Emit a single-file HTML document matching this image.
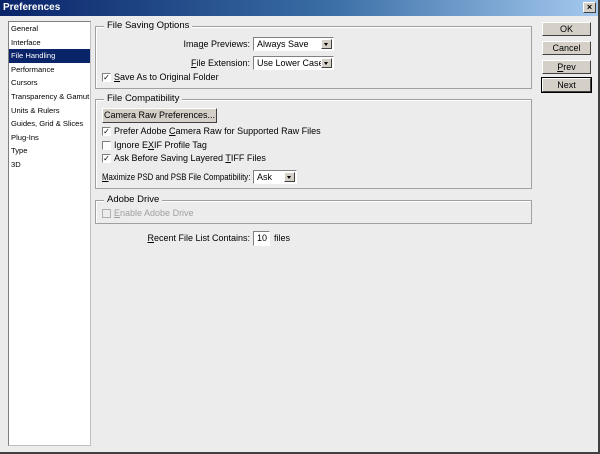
<!DOCTYPE html>
<html><head><style>
*{margin:0;padding:0;box-sizing:border-box}
body{width:600px;height:454px;overflow:hidden;background:#ececec;font-family:"Liberation Sans",sans-serif;font-size:9px;color:#000;position:relative}
.a{position:absolute;white-space:nowrap}
.r{position:absolute;white-space:nowrap;right:350px;text-align:right}
.title{left:0;top:0;width:600px;height:16px;background:linear-gradient(90deg,#0a246a,#3a6ea5 55%,#a6caf0);color:#fff;font-weight:bold;font-size:10px;padding:2px 3px}
.x{right:4px;top:2px;width:13px;height:11px;background:#d4d0c8;border:1px solid;border-color:#fff #404040 #404040 #fff;color:#000;font-size:9px;line-height:9px;text-align:center;font-weight:bold}
.list{left:8px;top:21px;width:83px;height:425px;background:#fff;border:1px solid;border-color:#808080 #c0c0c0 #c0c0c0 #808080;overflow:hidden}
.list div{height:13.6px;line-height:13.6px;padding-left:2px;font-size:7.6px}
.list .sel{background:#0a246a;color:#fff}
.grp{border:1px solid #a0a0a0;box-shadow:1px 1px 0 #fff inset}
.lg{background:#ececec;padding:0 3px;font-size:9.5px}
.sel2{background:#fff;border:1px solid;border-color:#808080 #fff #fff #808080;height:14px;padding-left:3px;line-height:12px;overflow:hidden}
.sel2 b{position:absolute;right:1px;top:1px;width:11px;height:10px;background:#d4d0c8;border:1px solid;border-color:#fff #404040 #404040 #fff}
.sel2 b:after{content:"";position:absolute;left:2px;top:3px;border:2.5px solid transparent;border-top:3px solid #000}
.cb{width:9px;height:9px;background:#fff;border:1px solid;border-color:#808080 #fff #fff #808080;font-size:8px;line-height:7px;text-align:center}
.btn{background:#d4d0c8;border:1px solid;border-color:#fff #404040 #404040 #fff;text-align:center;line-height:12px}
u{text-decoration:underline}
</style></head><body>
<div class="a title">Preferences</div>
<div class="a x">×</div>
<div class="a list">
<div>General</div><div>Interface</div><div class="sel">File Handling</div><div>Performance</div><div>Cursors</div><div>Transparency &amp; Gamut</div><div>Units &amp; Rulers</div><div>Guides, Grid &amp; Slices</div><div>Plug-Ins</div><div>Type</div><div>3D</div>
</div>

<div class="a grp" style="left:95px;top:26px;width:437px;height:63px"></div>
<div class="a lg" style="left:104px;top:20px">File Saving Options</div>
<div class="r" style="top:39px">Ima<u>g</u>e Previews:</div>
<div class="a sel2" style="left:253px;top:37px;width:81px">Always Save<b></b></div>
<div class="r" style="top:58px"><u>F</u>ile Extension:</div>
<div class="a sel2" style="left:253px;top:56px;width:81px">Use Lower Case<b></b></div>
<div class="a cb" style="left:102px;top:73px">✓</div>
<div class="a" style="left:114px;top:72px"><u>S</u>ave As to Original Folder</div>

<div class="a grp" style="left:95px;top:99px;width:437px;height:90px"></div>
<div class="a lg" style="left:104px;top:93px">File Compatibility</div>
<div class="a btn" style="left:102px;top:108px;width:115px;height:15px">Camera Raw Preferences...</div>
<div class="a cb" style="left:102px;top:127px">✓</div>
<div class="a" style="left:114px;top:126px">Prefer Adobe <u>C</u>amera Raw for Supported Raw Files</div>
<div class="a cb" style="left:102px;top:141px"></div>
<div class="a" style="left:114px;top:140px">Ignore E<u>X</u>IF Profile Tag</div>
<div class="a cb" style="left:102px;top:154px">✓</div>
<div class="a" style="left:114px;top:153px">Ask Before Saving Layered <u>T</u>IFF Files</div>
<div class="a" style="left:102px;top:172px;transform:scaleX(0.87);transform-origin:left"><u>M</u>aximize PSD and PSB File Compatibility:</div>
<div class="a sel2" style="left:253px;top:170px;width:44px">Ask<b></b></div>

<div class="a grp" style="left:95px;top:200px;width:437px;height:24px"></div>
<div class="a lg" style="left:104px;top:194px">Adobe Drive</div>
<div class="a cb" style="left:102px;top:209px;background:#ececec;color:#a0a0a0;border-color:#b0b0b0"></div>
<div class="a" style="left:114px;top:208px;color:#a0a0a0"><u>E</u>nable Adobe Drive</div>

<div class="r" style="top:233px"><u>R</u>ecent File List Contains:</div>
<div class="a sel2" style="left:253px;top:231px;width:17px;height:15px">10</div>
<div class="a" style="left:274px;top:233px">files</div>

<div class="a btn" style="left:542px;top:22px;width:49px;height:14px">OK</div>
<div class="a btn" style="left:542px;top:41px;width:49px;height:14px">Cancel</div>
<div class="a btn" style="left:542px;top:60px;width:49px;height:14px"><u>P</u>rev</div>
<div class="a btn" style="left:542px;top:78px;width:49px;height:14px;outline:1px solid #000">Next</div>

<div class="a" style="left:0;top:452px;width:600px;height:2px;background:#404040"></div>
<div class="a" style="left:598px;top:0;width:2px;height:454px;background:#404040"></div>
</body></html>
